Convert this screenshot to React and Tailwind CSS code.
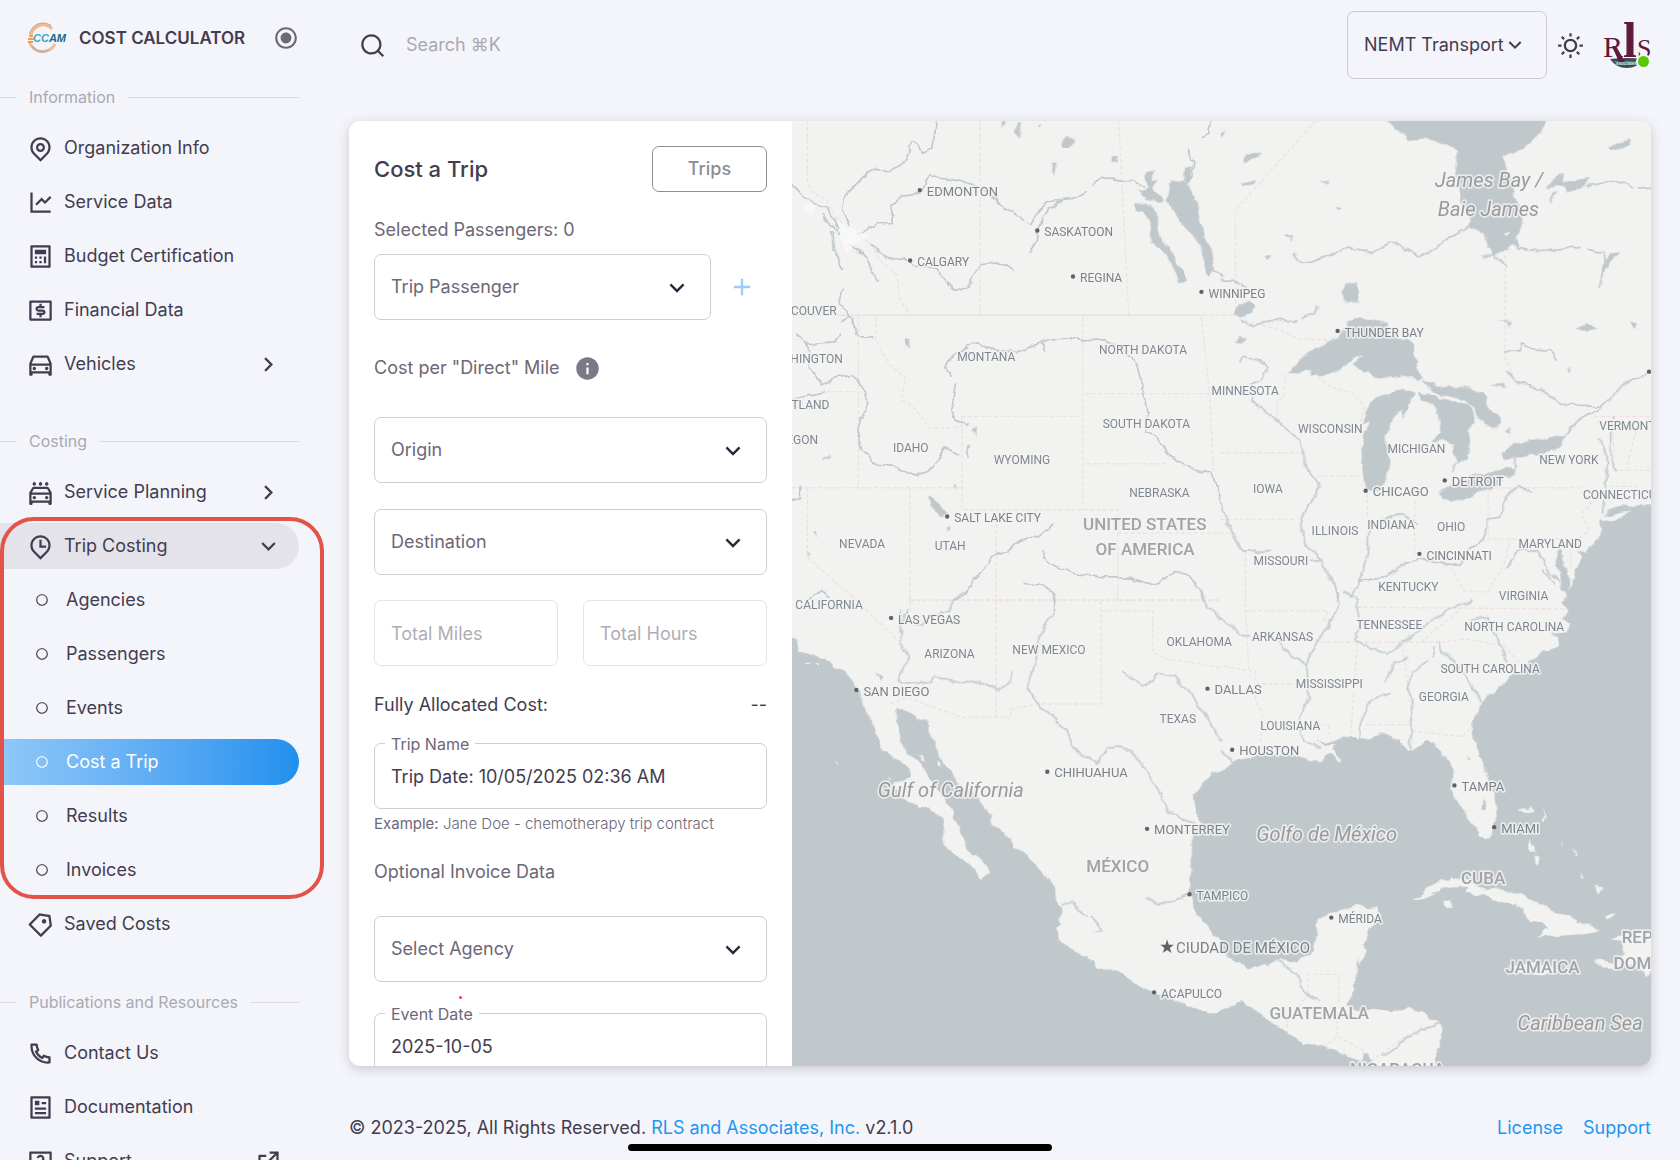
import { useState } from 'react';
import {
  RiAddLine,
  RiArrowDownSLine,
  RiArrowRightSLine,
  RiArticleLine,
  RiCalculatorLine,
  RiCarLine,
  RiCarWashingLine,
  RiCircleLine,
  RiExternalLinkLine,
  RiInformationFill,
  RiLineChartLine,
  RiMapPinLine,
  RiMapPinTimeLine,
  RiMoneyDollarBoxLine,
  RiPhoneLine,
  RiPriceTag3Line,
  RiQuestionnaireLine,
  RiRadioButtonLine,
  RiSearchLine,
  RiSunLine,
} from 'react-icons/ri';

const infoItems = [
  { label: 'Organization Info', icon: RiMapPinLine },
  { label: 'Service Data', icon: RiLineChartLine },
  { label: 'Budget Certification', icon: RiCalculatorLine },
  { label: 'Financial Data', icon: RiMoneyDollarBoxLine },
  { label: 'Vehicles', icon: RiCarLine, trailing: RiArrowRightSLine },
];

const tripCostingItems = ['Agencies', 'Passengers', 'Events', 'Cost a Trip', 'Results', 'Invoices'];

const resourceItems = [
  { label: 'Contact Us', icon: RiPhoneLine },
  { label: 'Documentation', icon: RiArticleLine },
  { label: 'Support', icon: RiQuestionnaireLine, trailing: RiExternalLinkLine },
];

// Map units are a third of a pixel
const cities = [
  { name: 'EDMONTON', x: 383, y: 207, size: 39 },
  { name: 'SASKATOON', x: 735, y: 328 },
  { name: 'CALGARY', x: 354, y: 418 },
  { name: 'REGINA', x: 842, y: 466 },
  { name: 'WINNIPEG', x: 1227, y: 512 },
  { name: 'SALT LAKE CITY', x: 465, y: 1185 },
  { name: 'THUNDER BAY', x: 1635, y: 629 },
  { name: 'CHICAGO', x: 1719, y: 1108, size: 39 },
  { name: 'DETROIT', x: 1956, y: 1077, size: 39 },
  { name: 'CINCINNATI', x: 1880, y: 1297 },
  { name: 'LAS VEGAS', x: 297, y: 1489 },
  { name: 'SAN DIEGO', x: 193, y: 1705, size: 39 },
  { name: 'DALLAS', x: 1245, y: 1701, size: 39 },
  { name: 'CHIHUAHUA', x: 765, y: 1950, size: 39 },
  { name: 'MONTERREY', x: 1064, y: 2121, size: 39 },
  { name: 'TAMPICO', x: 1191, y: 2317 },
  { name: 'ACAPULCO', x: 1085, y: 2611 },
  { name: 'HOUSTON', x: 1319, y: 1884, size: 39 },
  { name: 'TAMPA', x: 1985, y: 1991, size: 39 },
  { name: 'MIAMI', x: 2104, y: 2116, size: 39 },
  { name: 'MÉRIDA', x: 1616, y: 2387 },
];

const states = [
  { name: 'VANCOUVER', x: 134, y: 567, anchor: 'end' },
  { name: 'WASHINGTON', x: 152, y: 712, anchor: 'end' },
  { name: 'PORTLAND', x: 112, y: 851, anchor: 'end' },
  { name: 'OREGON', x: 78, y: 956, anchor: 'end' },
  { name: 'MONTANA', x: 582, y: 705 },
  { name: 'NORTH DAKOTA', x: 1052, y: 686 },
  { name: 'SOUTH DAKOTA', x: 1062, y: 908 },
  { name: 'IDAHO', x: 356, y: 980 },
  { name: 'WYOMING', x: 689, y: 1014 },
  { name: 'NEBRASKA', x: 1101, y: 1114 },
  { name: 'NEVADA', x: 210, y: 1266 },
  { name: 'UTAH', x: 474, y: 1272 },
  { name: 'MINNESOTA', x: 1358, y: 809 },
  { name: 'WISCONSIN', x: 1613, y: 923 },
  { name: 'MICHIGAN', x: 1871, y: 982 },
  { name: 'NEW YORK', x: 2328, y: 1015 },
  { name: 'VERMONT', x: 2419, y: 912, anchor: 'start' },
  { name: 'CONNECTICUT', x: 2370, y: 1121, anchor: 'start' },
  { name: 'IOWA', x: 1426, y: 1102 },
  { name: 'INDIANA', x: 1795, y: 1211 },
  { name: 'ILLINOIS', x: 1627, y: 1227 },
  { name: 'OHIO', x: 1975, y: 1217 },
  { name: 'MARYLAND', x: 2272, y: 1266 },
  { name: 'MISSOURI', x: 1465, y: 1316 },
  { name: 'KENTUCKY', x: 1847, y: 1394 },
  { name: 'VIRGINIA', x: 2192, y: 1423 },
  { name: 'CALIFORNIA', x: 111, y: 1450 },
  { name: 'ARIZONA', x: 472, y: 1596 },
  { name: 'NEW MEXICO', x: 770, y: 1585 },
  { name: 'OKLAHOMA', x: 1220, y: 1561 },
  { name: 'TEXAS', x: 1156, y: 1790 },
  { name: 'TENNESSEE', x: 1790, y: 1509 },
  { name: 'ARKANSAS', x: 1470, y: 1546 },
  { name: 'NORTH CAROLINA', x: 2164, y: 1515 },
  { name: 'SOUTH CAROLINA', x: 2092, y: 1641 },
  { name: 'MISSISSIPPI', x: 1610, y: 1685 },
  { name: 'GEORGIA', x: 1953, y: 1725 },
  { name: 'LOUISIANA', x: 1493, y: 1813 },
];

const countries = [
  { name: 'UNITED STATES', x: 1057, y: 1208 },
  { name: 'OF AMERICA', x: 1058, y: 1284 },
  { name: 'MÉXICO', x: 976, y: 2232 },
  { name: 'CUBA', x: 2071, y: 2268 },
  { name: 'JAMAICA', x: 2249, y: 2535 },
  { name: 'REP', x: 2486, y: 2447, anchor: 'start' },
  { name: 'DOM', x: 2462, y: 2523, anchor: 'start' },
  { name: 'GUATEMALA', x: 1580, y: 2675 },
  { name: 'NICARAGUA', x: 1814, y: 2842 },
];

const seas = [
  { name: 'James Bay /', x: 2089, y: 181 },
  { name: 'Baie James', x: 2087, y: 266 },
  { name: 'Gulf of California', x: 476, y: 2009 },
  { name: 'Golfo de México', x: 1602, y: 2140 },
  { name: 'Caribbean Sea', x: 2174, y: 2707, anchor: 'start' },
];

function Borders() {
  return (
    <g fill="none" stroke="#eee0df" strokeWidth="4" strokeDasharray="12 7">
      <g transform="translate(-6 -3)">
        <path d="M52 3V185L65 215L110 240L130 280L165 320L240 370L270 420L320 465L330 540L362 585" />
        <path d="M6 585H1240" strokeDasharray="none" />
        <path d="M570 3V585M985 3L1015 585M205 585V1102M257 590V660L300 735L345 770L335 840L365 855L420 925L515 920" />
        <path d="M877 590V1170M1232 590L1250 750L1258 830L1268 1050M885 820H1258M888 1030H1130M515 888H877M515 888V1168H982V1440M110 814H205" />
        <path d="M6 1102H515M52 1102V1310L200 1440M360 1102V1440M618 1190V1440M360 1437H1290M982 1238H1290" />
      </g>
      <g transform="translate(1284 -3)">
        <path d="M285 3L45 270V585L-60 585M70 600L180 630L230 655L320 660M195 760L190 830L170 840V900M290 770L330 800L400 820L430 860L420 910" />
        <path d="M0 997H235M290 1067H425M0 1197H225M0 1238H45M75 1290V1440M440 1118V1230M582 1140V1300M802 1100V1256H1070M802 1102H1075L1110 1150L1080 1180L1105 1230L1070 1256M853 405V720L875 760" />
        <path d="M1120 888H1290M1175 890L1180 1055M1245 930L1215 1050M1180 1050H1290M1165 1098H1250M690 1340L730 1410L800 1415L850 1330L870 1256M1050 1256V1350" />
      </g>
      <g transform="translate(-6 1407)">
        <path d="M200 30L325 150M360 30H1290M618 30V380M360 30V60M982 0V28M932 30V340H745L662 355V380H515L350 320L302 340M932 60H1087V185L1130 205L1200 215L1290 232" />
      </g>
      <g transform="translate(1284 1407)">
        <path d="M75 0V60L85 240L0 225M75 60H320L310 95M85 240H105V330L125 370L120 460M105 280H245M300 155H665L730 145L850 165L895 215M410 50L1030 55M410 155L390 435M545 155L575 400M435 402H575M575 420L725 438L750 410M250 402H325V430M600 155L750 30" />
        <path d="M262 1210V1150H355V1232M200 1330V1290L262 1210M310 1370L350 1335L430 1380M350 1335V1260M450 1410L550 1340L600 1315" />
      </g>
    </g>
  );
}

function Rivers() {
  return (
    <g fill="none" stroke="#c0c9cd" strokeWidth="5" strokeLinejoin="round" strokeLinecap="round" filter="url(#ragged)">
      <g transform="translate(-6 -3)">
        <path d="M180 320L155 265L160 235L195 195L240 150L300 155L340 125L365 65L385 70L400 100L425 85L435 3" />
        <path d="M205 340L235 330L260 308L310 308L302 255L340 228L385 222L420 170L480 175L540 188L590 215L635 262L720 312L770 242L850 235L885 218" />
        <path d="M720 400L735 370L745 320L775 265L810 240M910 198L935 168L990 180L1030 178L1060 198M240 372L290 415L345 410L370 435L440 445L490 512L535 495L575 430L630 425L668 450" />
        <path d="M6 195L70 250L110 262L140 325M100 280L145 345M180 372L225 415L265 480M125 335L130 385L160 450M160 500L150 545L172 585L190 590L200 645L245 650M172 590L155 608" />
        <path d="M20 645L50 670L135 665L148 648M50 670L58 740L95 795L130 775L185 765L205 780L235 835L200 935L215 985L255 1030L310 1038L360 1062L415 1052L465 985L505 1000M6 838L100 815" />
        <path d="M480 765L467 735L500 700L560 662L590 680L680 700L760 662L850 655L880 662L945 658L1000 695L1035 725L1055 790L1070 880L1060 930L1105 955L1130 1000L1190 1040L1260 1055L1290 1130" />
        <path d="M755 665L765 692M495 790L485 870L495 900L530 912M537 975L530 1010M785 1215L740 1250L680 1265L650 1295L610 1305L560 1370L520 1430L490 1440" />
        <path d="M757 1290L775 1335L830 1350L910 1368L1020 1370L1105 1390L1155 1350L1200 1370L1225 1405L1240 1438M702 1386L750 1390L785 1410L790 1440M6 1142L28 1135L30 1100M60 1440L95 1410L118 1430M1190 90L1210 130L1205 165L1185 195M1230 55L1255 40L1260 3M1270 455L1290 468" />
      </g>
      <g transform="translate(1284 -3)">
        <path d="M220 400L245 430L300 415L380 380L450 400L510 365L600 412L680 355L745 320M890 385L950 395L1080 382M1100 385L1148 395L1150 450L1135 500M1095 200L1175 180L1235 202M1255 200L1290 208M790 410L815 395L860 435" />
        <path d="M860 750L890 785L960 810L1035 855L1145 855L1200 800L1290 752M1025 945L1085 890L1145 860M858 695L895 695L900 670L930 685L985 690L1010 720M0 480L40 480L70 500M60 600L100 620L135 600L225 602M245 595L280 580L288 560" />
        <path d="M55 725L65 705L110 715L142 745L125 775L95 790L95 840L165 900L240 960L255 1030L302 1100L262 1150L240 1210L250 1265L300 1320L350 1420L345 1440M0 1130L20 1210L70 1295L150 1290M270 1320L300 1318M445 1232L440 1300L410 1400L390 1430M415 1382L500 1370L550 1330L600 1312L640 1325L715 1335L745 1285L790 1260L800 1195L840 1190L855 1130L895 1095L935 1118" />
        <path d="M1145 1175L1160 1020L1150 985L1135 955M1175 890L1170 1000L1180 1050M480 1195L550 1185L590 1215M700 1030L690 1060M880 1015L885 1042M855 1340L900 1285L950 1290L985 1360L1015 1380M965 1350L1000 1390M195 345H215V358" />
      </g>
      <g transform="translate(-6 1407)">
        <path d="M330 60L330 150L355 198L335 240L325 270L340 280L425 275L435 258L510 278L550 268L625 300L665 270L665 245M330 105L350 60M380 100L395 105L410 85L470 65L490 30L535 0M790 0L790 70L745 140L730 230L712 290L750 350L830 420L850 475L920 520L950 470L1020 475L1060 530L1110 610L1130 665L1215 697" />
        <path d="M1000 248L1055 282L1090 270L1100 248L1145 255L1205 310L1240 370L1290 450M1070 915L1105 940L1190 912M815 935L840 935L890 978M905 978L940 1020M1235 0L1245 50L1290 80" />
      </g>
      <g transform="translate(1284 1407)">
        <path d="M0 80L60 130L90 133M345 0L355 40L320 110L270 190L255 230L265 320L235 380L250 450L300 470M370 0L405 25L418 100L405 150L500 190L580 130L680 60L755 28M180 155L210 195L255 222" />
        <path d="M560 202L525 215L495 275M505 305L450 330L420 390L415 440M640 175L640 195M620 210L570 250L565 290L575 350L570 470M660 155L665 180L730 250L780 335M750 90L800 78L810 110L840 165L855 215M180 1110L235 1155L240 1185L290 1230M480 1388L510 1382L570 1325L655 1300M0 480L25 495L40 525" />
      </g>
    </g>
  );
}

function Water() {
  return (
    <g filter="url(#ragged)">
      <g fill="#c0c8cc">
        <g transform="translate(-6 1407)">
          <path d="M-20 130L18 150L22 183L60 190L95 205L120 212L135 233L160 238L180 258L190 290L205 300L215 330L225 360L240 380L255 410L262 435L270 445L275 475L300 495L330 510L350 530L362 555L340 572L310 580L320 610L345 625L370 640L385 652L405 645L430 660L452 680L465 710L460 740L465 765L500 795L525 815L555 835L568 868L580 870L598 845L590 820L570 800L555 795L545 798L530 770L520 740L500 710L492 670L480 650L465 635L440 600L425 570L415 550L390 520L350 480L330 450L328 410L316 385L320 352L350 365L370 368L380 380L410 388L412 415L430 440L435 470L455 500L470 530L500 560L520 590L570 630L590 655L605 670L602 700L625 718L665 745L670 770L700 785L725 810L760 850L790 885L795 930L815 945L817 970L805 990L812 1000L795 1012L810 1050L845 1075L880 1095L915 1125L985 1143L1040 1180L1090 1205L1150 1225L1200 1248L1262 1268L1310 1250L1350 1232L1400 1260L1440 1290L1490 1330L1540 1358L1590 1362L1640 1385L1690 1400L1715 1400L1720 1385L1735 1390L1745 1410L1770 1480L-20 1480Z" />
        </g>
        <g transform="translate(1284 1407)">
          <path d="M645 1480L648 1410L645 1380L660 1340L662 1315L655 1298L625 1285L610 1265L575 1253L540 1258L500 1262L450 1255L420 1260L395 1252L375 1240L390 1220L400 1200L402 1150L410 1105L415 1120L432 1100L435 1060L442 1045L440 1020L460 1005L475 985L478 965L465 948L440 952L410 945L370 955L330 965L300 980L290 1000L288 1035L280 1075L245 1100L225 1115L190 1105L150 1115L85 1132L60 1110L20 1105L-5 1045L-35 1010L-55 990L-75 955L-85 930L-93 900L-87 830L-85 740L-75 700L-60 695L-70 670L-77 640L-80 610L-60 595L-50 575L-30 560L-28 540L0 545L30 525L50 505L90 497L120 490L200 488L240 495L265 512L285 508L305 515L310 495L330 490L355 515L362 512L335 480L345 460L320 465L290 448L330 455L370 438L410 440L450 440L470 432L500 432L540 450L560 478L600 465L620 455L640 462L660 490L690 515L697 545L690 585L688 598L700 620L720 650L735 660L740 690L765 710L770 735L800 742L815 725L828 690L825 640L815 600L800 560L780 510L765 460L753 430L755 390L775 350L800 315L850 285L870 250L910 230L945 200L965 180L1010 165L1010 145L990 130L1035 125L1048 100L1030 85L1040 60L1025 40L1040 5L1060 -40L1085 -100L1070 -120L1095 -110L1120 -145L1140 -185L1138 -205L1150 -225L1165 -245L1200 -255L1240 -250L1270 -260L1320 -265L1320 1480Z" />
          <path d="M783 640L790 628L798 640L792 656L778 652ZM742 490L750 505L744 508Z" />
        </g>
        <g transform="translate(1284 -3)">
          <path d="M480 -20L520 25L555 45L560 60L620 55L690 75L712 95L705 150L715 190L720 250L750 290L745 320L790 350L815 400L860 395L875 370L895 390L885 350L905 320L900 290L885 240L875 190L848 110L900 90L950 50L990 -20Z" />
          <path d="M205 758L250 705L300 675L350 650L385 620L385 605L405 590L440 595L500 605L505 640L560 655L580 670L578 700L592 720L590 745L605 770L590 780L570 770L540 765L500 770L480 775L450 770L440 755L410 745L395 735L425 705L400 712L380 735L350 755L300 768L270 765L275 745L240 760Z" />
          <path d="M420 915L440 870L465 830L500 820L545 808L580 820L560 850L550 895L540 870L520 890L510 920L495 950L500 1000L508 1040L500 1080L475 1110L450 1118L430 1090L425 1030L422 990L430 950L445 905Z" />
          <path d="M585 815L640 825L700 845L740 850L755 870L765 900L740 930L745 970L742 1010L705 1030L695 1000L700 970L680 960L650 965L630 965L660 940L655 890L640 855L600 835Z" />
          <path d="M600 775L650 795L700 800L750 805L790 820L800 850L830 880L845 910L825 925L795 915L770 890L760 865L735 840L690 830L640 815L620 800Z" />
          <path d="M650 1118L690 1095L750 1070L800 1055L885 1042L880 1060L850 1080L800 1110L750 1130L700 1142L665 1135Z" />
          <path d="M845 1000L875 970L930 962L990 950L1030 945L1025 980L990 990L950 1005L880 1012L850 1015Z" />
          <path d="M1012 1285L1025 1290L1030 1330L1045 1370L1045 1420L1025 1410L1015 1350L1008 1310ZM362 520L375 490L405 485L412 515L408 550L380 550ZM40 585L55 550L85 545L102 560L95 580L60 592Z" />
          <path d="M65 130L80 100L125 98L100 120ZM57 180L105 182L95 195L65 192ZM295 185L330 188L322 196ZM338 262L368 262L355 270ZM135 402L152 405L145 420ZM1160 85L1190 68L1230 58L1225 75L1185 90ZM965 205L1000 180L1010 155L1030 160L1025 185L1105 180L1080 205L1040 215L1030 198ZM988 250L995 218L1010 220ZM1150 420L1175 400L1200 395L1165 430L1145 465ZM1070 630L1095 605L1130 625L1105 630ZM1225 610L1250 608L1250 628L1235 625ZM825 595L870 605L865 622L850 605ZM808 795L855 790L855 800ZM852 930L870 920L865 938ZM40 668L60 650L78 655L60 670ZM1040 745L1052 745L1048 758ZM0 40L20 25L5 58Z" />
        </g>
        <g transform="translate(-6 -3)">
          <path d="M1145 183L1185 185L1200 210L1215 240L1230 300L1245 360L1275 410L1270 450L1255 472L1242 465L1245 420L1225 370L1190 340L1165 300L1145 265L1125 245L1135 205Z" />
          <path d="M1030 250L1070 245L1100 270L1100 320L1110 365L1145 380L1155 430L1180 450L1190 480L1165 490L1150 450L1125 400L1085 370L1080 320L1060 275L1040 270Z" />
          <path d="M1040 210L1070 205L1068 155L1088 150L1088 180L1105 175L1085 205L1120 235L1115 250L1085 240L1060 235ZM1185 140L1205 135L1195 190L1175 180Z" />
          <path d="M815 65L830 52L858 62L835 85L818 85ZM788 128L798 128L792 165L785 150ZM964 110L976 106L975 130L964 125ZM680 10L690 5L688 55L670 40ZM635 5H650L640 30ZM748 16L760 12L755 24ZM350 658L360 655L360 685L350 680ZM415 1128L435 1130L468 1178L450 1190L430 1175ZM470 1215L482 1222L472 1235ZM95 1015L125 1005L118 1015ZM68 1230L80 1235L76 1248ZM48 1290L58 1300L50 1310ZM496 1092L504 1092L502 1110ZM540 925L556 918L556 942ZM26 1095L36 1098L30 1112Z" />
        </g>
        <path transform="translate(-6 1407)" d="M255 248L278 262L272 270ZM915 1018L945 1022L930 1026Z" />
      </g>
      {/* Islands */}
      <g fill="#f2f3f1">
        <path transform="translate(1284 -3)" d="M1138 1198L1150 1186L1190 1177L1235 1168L1205 1188L1150 1202ZM848 338L868 335L860 348Z" />
        <g transform="translate(1284 1407)">
          <path d="M578 930L600 920L615 895L660 870L700 860L740 870L790 890L850 895L880 910L910 915L950 935L990 960L1050 975L1060 990L1110 1005L1130 1022L1080 1030L1010 1035L950 1040L980 1015L970 995L930 990L905 965L905 945L870 942L820 930L790 910L770 915L730 905L745 890L710 885L670 890L640 910L615 925L600 930Z" />
          <path d="M670 930L690 928L695 945L675 950ZM860 1128L910 1118L980 1125L1010 1140L970 1155L900 1142Z" />
          <path d="M1170 1045L1200 1035L1240 1020L1320 1030L1320 1130L1290 1140L1275 1160L1262 1140L1235 1125L1180 1130L1140 1130L1118 1115L1125 1106L1180 1115L1215 1090L1205 1055Z" />
          <path d="M890 660L930 652L935 660L895 668ZM970 655L980 675L975 695L968 690L974 672ZM925 748L940 765L942 785L925 785ZM938 795L955 800L952 822L940 812ZM1155 978L1190 965L1180 978L1160 985ZM1120 880L1145 888L1138 905ZM1020 740L1030 765L1024 760ZM1050 770L1070 795L1062 795ZM1075 845L1095 865L1085 862Z" />
        </g>
        <path transform="translate(-6 1407)" d="M440 512L452 512L450 530L440 528ZM385 490L395 490L405 512L395 510ZM135 512L144 522L140 526ZM295 560L302 562L298 574ZM40 218L62 216L60 222ZM70 214L90 216L85 222Z" />
      </g>
    </g>
  );
}

function CoverageMap() {
  return (
    <svg
      role="img"
      aria-label="Map of North America"
      viewBox="0 0 2574 2835"
      preserveAspectRatio="xMinYMin slice"
      className="block h-full w-full font-[Roboto,sans-serif]"
    >
      <defs>
        <filter id="ragged" x="0" y="0" width="2574" height="2835" filterUnits="userSpaceOnUse">
          <feTurbulence type="fractalNoise" baseFrequency="0.025" numOctaves="3" seed="4" result="noise" />
          <feDisplacementMap in="SourceGraphic" in2="noise" scale="22" xChannelSelector="R" yChannelSelector="G" />
        </filter>
      </defs>
      <rect width="2574" height="2835" fill="#f2f3f1" />
      <Borders />
      <Rivers />
      <Water />
      <path d="M30 255L60 245L72 262L60 285ZM140 300L190 325L235 345L195 362L165 395L145 350Z" fill="#fafafa" opacity="0.7" />

      <g strokeLinejoin="round" paintOrder="stroke" stroke="#f2f3f1" strokeWidth="10" strokeOpacity="0.8">
        {states.map((s) => (
          <text key={s.name} x={s.x} y={s.y + 13} fontSize="36" textAnchor={s.anchor || 'middle'} fill="#7f8892">
            {s.name}
          </text>
        ))}
        {countries.map((c) => (
          <text key={c.name} x={c.x} y={c.y + 17} fontSize="51" fontWeight="500" textAnchor={c.anchor || 'middle'} fill="#a0a3a7">
            {c.name}
          </text>
        ))}
        {seas.map((s) => (
          <text key={s.name} x={s.x} y={s.y + 18} fontSize="60" fontStyle="italic" textAnchor={s.anchor || 'middle'} fill="#989a9c">
            {s.name}
          </text>
        ))}
        {cities.map((c) => (
          <text key={c.name} x={c.x + 21} y={c.y + 17} fontSize={c.size || 36} fill="#7b828a">
            {c.name}
          </text>
        ))}
        <text x="1151" y="2492" fontSize="45" fill="#7b828a">CIUDAD DE MÉXICO</text>
      </g>
      <g fill="#5f6265">
        {cities.map((c) => (
          <circle key={c.name} cx={c.x} cy={c.y} r="6.5" />
        ))}
        <circle cx="2568" cy="751" r="6.5" />
        <path d="M1124 2453L1129 2468L1144 2468L1132 2478L1137 2493L1124 2484L1111 2493L1116 2478L1104 2468L1119 2468Z" />
      </g>
    </svg>
  );
}

function CcamLogo() {
  return (
    <svg width="40" height="32" viewBox="0 0 40 32" role="img" aria-label="CCAM logo" className="shrink-0 overflow-visible">
      <path d="M24 4A13.5 13.5 0 0 0 3 12" fill="none" stroke="#a9a7a4" strokeWidth="2" />
      <path d="M25 7A12 12 0 0 0 4 14" fill="none" stroke="#f3b98a" strokeWidth="3" />
      <path d="M2 19A14 14 0 0 0 28 22" fill="none" stroke="#f0bd94" strokeWidth="3" />
      <path d="M5 24A13 13 0 0 0 22 28" fill="none" stroke="#b5b3b0" strokeWidth="2" />
      <path d="M1 17H7M1 20H6M2 14H6" stroke="#ef9a5b" strokeWidth="2" />
      <text x="6" y="20" fontFamily="Liberation Sans, sans-serif" fontSize="11" fontWeight="700" fontStyle="italic" fill="#17698a">
        <tspan fill="#3aa9c0">CC</tspan>AM
      </text>
    </svg>
  );
}

function RlsLogo() {
  return (
    <svg width="48" height="48" viewBox="0 0 48 48" role="img" aria-label="RLS and Associates" className="overflow-visible">
      <path d="M7 38Q24 36 41 38Q34 47 24 47Q13 47 7 38Z" fill="#3f4a4c" />
      <path d="M10 40H38L34 44H14Z" fill="#3f7f78" />
      <path d="M9 25L13 25L22 41H16Z" fill="#5f1a3c" />
      <text x="0" y="36" fontSize="30" fill="#5f1a3c" fontFamily="Liberation Serif, serif">
        R<tspan fontSize="50" fontWeight="700">l</tspan>
        <tspan fontSize="26">S</tspan>
      </text>
      <text x="13" y="44" fontSize="5" fill="#e8eeee" fontFamily="Liberation Sans, sans-serif">ssociates</text>
    </svg>
  );
}

function NavSection({ title }) {
  return (
    <div className="flex h-6 items-center gap-3 text-[16px] text-[#aba8b3]">
      <span className="h-px w-[17px] bg-[#dcdbe1]" />
      <span>{title}</span>
      <span className="h-px flex-1 bg-[#dcdbe1]" />
    </div>
  );
}

function NavItem({ label, icon: Icon, trailing: Trailing, open }) {
  return (
    <a
      href="#"
      aria-expanded={open}
      className={`flex h-[46px] items-center gap-[10px] rounded-r-full pr-[17px] pl-[27px] ${open ? 'bg-[#e4e3ea]' : ''}`}
    >
      <Icon size={27} className="shrink-0" />
      <span className="flex-1">{label}</span>
      {Trailing && <Trailing size={27} />}
    </a>
  );
}

function NavSubItem({ label, active, onClick }) {
  return (
    <a
      href="#"
      onClick={onClick}
      className={`flex h-[46px] items-center gap-[17px] rounded-r-full pl-[35px] ${
        active ? 'bg-linear-to-r from-[#8fc8f8] to-[#1e90ee] text-white' : ''
      }`}
    >
      <RiCircleLine size={14} className="shrink-0" />
      <span>{label}</span>
    </a>
  );
}

function SelectBox({ label, className = '' }) {
  return (
    <div className={`relative ${className}`}>
      <select
        aria-label={label}
        className="h-[66px] w-full appearance-none rounded-[7px] border border-[#cfcdd3] bg-transparent px-4 text-[#6d6777]"
      >
        <option>{label}</option>
      </select>
      <RiArrowDownSLine size={28} className="pointer-events-none absolute top-5 right-5 text-[#2e263d]" />
    </div>
  );
}

function OutlinedInput({ id, label, defaultValue }) {
  return (
    <div className="relative">
      <input
        id={id}
        type="text"
        defaultValue={defaultValue}
        className="h-[66px] w-full rounded-[7px] border border-[#cfcdd3] bg-transparent px-4"
      />
      <label htmlFor={id} className="absolute -top-[9px] left-[11px] bg-white px-[6px] text-[16px] leading-5 text-[#6d6777]">
        {label}
      </label>
    </div>
  );
}

export default function App() {
  const [activeItem, setActiveItem] = useState('Cost a Trip');

  return (
    <div className="flex h-screen overflow-hidden bg-[#f4f5fa] font-[Inter,sans-serif] text-[18px] leading-7 text-[#433c50]">
      <aside className="flex w-[324px] shrink-0 flex-col pr-[25px]">
        <div className="flex h-[85px] shrink-0 items-start pt-[22px] pl-[27px]">
          <CcamLogo />
          <span className="ml-3 flex-1 text-[17px] leading-8 font-semibold">COST CALCULATOR</span>
          <button type="button" aria-label="Pin menu" className="mt-[3px] text-[#6d6777]">
            <RiRadioButtonLine size={26} />
          </button>
        </div>

        <nav>
          <NavSection title="Information" />
          <div className="mt-4 flex flex-col gap-2">
            {infoItems.map((item) => (
              <NavItem key={item.label} {...item} />
            ))}
          </div>

          <div className="mt-[42px]">
            <NavSection title="Costing" />
          </div>
          <div className="mt-4 flex flex-col gap-2">
            <NavItem label="Service Planning" icon={RiCarWashingLine} trailing={RiArrowRightSLine} />
            <div className="relative flex flex-col gap-2">
              <NavItem label="Trip Costing" icon={RiMapPinTimeLine} trailing={RiArrowDownSLine} open />
              {tripCostingItems.map((label) => (
                <NavSubItem key={label} label={label} active={label === activeItem} onClick={() => setActiveItem(label)} />
              ))}
              {/* Highlight around the open group */}
              <div className="pointer-events-none absolute -inset-y-[6px] -right-[25px] left-0 rounded-[34px] border-4 border-[#e2544a]" />
            </div>
            <NavItem label="Saved Costs" icon={RiPriceTag3Line} />
          </div>

          <div className="mt-[43px]">
            <NavSection title="Publications and Resources" />
          </div>
          <div className="mt-4 flex flex-col gap-2">
            {resourceItems.map((item) => (
              <NavItem key={item.label} {...item} />
            ))}
          </div>
        </nav>
      </aside>

      <main className="flex min-w-0 flex-1 flex-col pt-[11px] pr-[29px] pl-[25px]">
        <header className="flex h-[68px] shrink-0 items-center">
          <label htmlFor="search" className="pl-[10px]">
            <RiSearchLine size={27} aria-label="Search" />
          </label>
          <input
            id="search"
            type="text"
            placeholder="Search ⌘K"
            className="ml-5 min-w-0 flex-1 bg-transparent outline-none placeholder:text-[#aba8b3]"
          />
          <div className="relative">
            <select
              aria-label="Organization"
              className="h-[68px] w-[200px] appearance-none rounded-[7px] border border-[#cbcad1] bg-transparent px-4"
            >
              <option>NEMT Transport</option>
            </select>
            <RiArrowDownSLine size={24} className="pointer-events-none absolute top-[22px] right-5" />
          </div>
          <button type="button" aria-label="Toggle theme" className="ml-[10px]">
            <RiSunLine size={27} />
          </button>
          <button type="button" aria-label="Account" className="relative ml-[19px]">
            <RlsLogo />
            <span className="absolute right-[2px] bottom-[2px] h-[11px] w-[11px] rounded-full bg-[#56ca00] ring-2 ring-[#f4f5fa]" />
          </button>
        </header>

        <section className="mt-[42px] flex min-h-0 flex-1 overflow-hidden rounded-[11px] bg-white shadow-[0_3px_12px_rgba(46,38,61,0.22)]">
          <form className="w-[443px] shrink-0 overflow-hidden p-[25px]">
            <div className="flex h-[46px] items-center justify-between">
              <h1 className="text-[22px] font-medium">Cost a Trip</h1>
              <button
                type="button"
                className="h-[46px] w-[115px] rounded-[7px] border border-[#8a8d93] font-medium text-[#8a8d93]"
              >
                Trips
              </button>
            </div>

            <p className="mt-6 text-[#6d6777]">Selected Passengers: 0</p>
            <div className="mt-[10px] flex items-center">
              <SelectBox label="Trip Passenger" className="flex-1" />
              <button type="button" aria-label="Add passenger" className="mr-[11px] ml-[17px] text-[#9ccdf8]">
                <RiAddLine size={28} />
              </button>
            </div>

            <div className="mt-[34px] flex items-center gap-[14px] text-[#6d6777]">
              <span>Cost per "Direct" Mile</span>
              <RiInformationFill size={27} className="text-[#7d7886]" />
            </div>
            <SelectBox label="Origin" className="mt-[35px]" />
            <SelectBox label="Destination" className="mt-[26px]" />

            <div className="mt-[25px] grid grid-cols-2 gap-[25px]">
              <input
                type="text"
                disabled
                aria-label="Total Miles"
                placeholder="Total Miles"
                className="h-[66px] w-full rounded-[7px] border border-[#e4e3e7] px-4 placeholder:text-[#b0adb6]"
              />
              <input
                type="text"
                disabled
                aria-label="Total Hours"
                placeholder="Total Hours"
                className="h-[66px] w-full rounded-[7px] border border-[#e4e3e7] px-4 placeholder:text-[#b0adb6]"
              />
            </div>

            <div className="mt-[25px] mb-6 flex justify-between">
              <span>Fully Allocated Cost:</span>
              <span>--</span>
            </div>
            <OutlinedInput id="trip-name" label="Trip Name" defaultValue="Trip Date: 10/05/2025 02:36 AM" />
            <p className="mt-[5px] text-[15px] leading-5 font-light text-[#6d6777]">
              <span className="font-normal">Example:</span> Jane Doe - chemotherapy trip contract
            </p>

            <p className="mt-6 text-[#6d6777]">Optional Invoice Data</p>
            <SelectBox label="Select Agency" className="mt-[30px]" />
            <div className="relative mt-[31px]">
              <OutlinedInput id="event-date" label="Event Date" defaultValue="2025-10-05" />
              <span className="absolute -top-[17px] left-[85px] h-[3px] w-[3px] rounded-full bg-[#f5385f]" />
            </div>
          </form>

          <div className="min-w-0 flex-1">
            <CoverageMap />
          </div>
        </section>

        <footer className="flex shrink-0 justify-between pt-12 pb-[18px]">
          <span>
            © 2023-2025, All Rights Reserved.{' '}
            <a href="#" className="text-[#2196f3]">RLS and Associates, Inc.</a> v2.1.0
          </span>
          <span className="flex gap-5 text-[#2196f3]">
            <a href="#">License</a>
            <a href="#">Support</a>
          </span>
        </footer>
      </main>

      {/* Home indicator */}
      <div className="fixed bottom-[9px] left-1/2 h-[7px] w-[424px] -translate-x-1/2 rounded-full bg-black" />
    </div>
  );
}
